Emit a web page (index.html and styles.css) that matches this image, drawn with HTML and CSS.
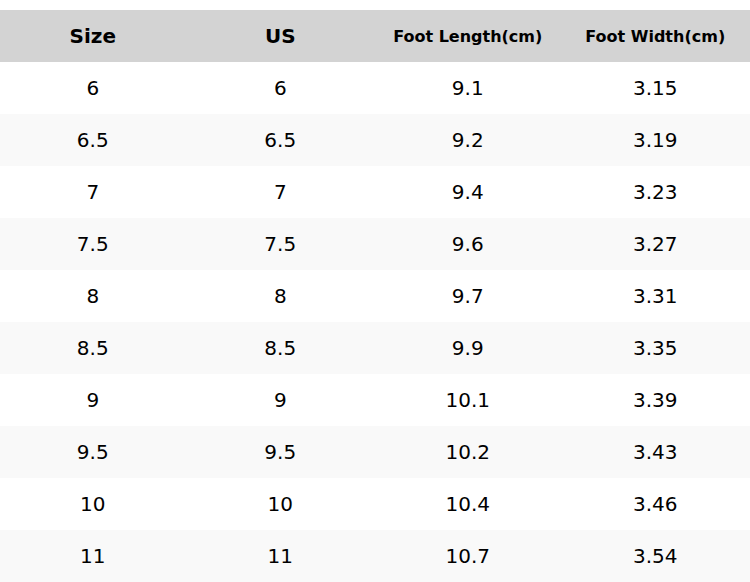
FILE: index.html
```html
<!DOCTYPE html>
<html>
<head>
<meta charset="utf-8">
<link rel="stylesheet" href="styles.css">
</head>
<body>
<table class="size-table">
  <thead>
    <tr>
      <th>Size</th>
      <th>US</th>
      <th class="small">Foot Length(cm)</th>
      <th class="small">Foot Width(cm)</th>
    </tr>
  </thead>
  <tbody>
    <tr><td>6</td><td>6</td><td>9.1</td><td>3.15</td></tr>
    <tr><td>6.5</td><td>6.5</td><td>9.2</td><td>3.19</td></tr>
    <tr><td>7</td><td>7</td><td>9.4</td><td>3.23</td></tr>
    <tr><td>7.5</td><td>7.5</td><td>9.6</td><td>3.27</td></tr>
    <tr><td>8</td><td>8</td><td>9.7</td><td>3.31</td></tr>
    <tr><td>8.5</td><td>8.5</td><td>9.9</td><td>3.35</td></tr>
    <tr><td>9</td><td>9</td><td>10.1</td><td>3.39</td></tr>
    <tr><td>9.5</td><td>9.5</td><td>10.2</td><td>3.43</td></tr>
    <tr><td>10</td><td>10</td><td>10.4</td><td>3.46</td></tr>
    <tr><td>11</td><td>11</td><td>10.7</td><td>3.54</td></tr>
  </tbody>
</table>
</body>
</html>
```
FILE: styles.css
```css
html, body {
  margin: 0;
  padding: 0;
  background: #ffffff;
}
body {
  padding-top: 10px;
  font-family: "DejaVu Sans", sans-serif;
  color: #000000;
}
.size-table {
  width: 750px;
  border-collapse: collapse;
  table-layout: fixed;
}
.size-table th,
.size-table td {
  height: 52px;
  padding: 0 2px 0 0;
  text-align: center;
  vertical-align: middle;
}
.size-table th {
  background: #d3d3d3;
  font-weight: bold;
  font-size: 20px;
  color: #000000;
}
.size-table th.small {
  font-size: 16px;
}
.size-table td {
  font-size: 20px;
}
.size-table tbody tr:nth-child(even) td {
  background: #f9f9f9;
}
```
